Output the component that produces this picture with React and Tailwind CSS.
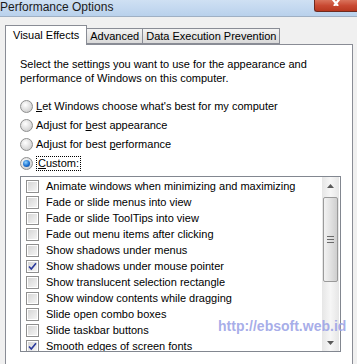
import React from "react";

const effects = [
  { label: "Animate windows when minimizing and maximizing", on: false },
  { label: "Fade or slide menus into view", on: false },
  { label: "Fade or slide ToolTips into view", on: false },
  { label: "Fade out menu items after clicking", on: false },
  { label: "Show shadows under menus", on: false },
  { label: "Show shadows under mouse pointer", on: true },
  { label: "Show translucent selection rectangle", on: false },
  { label: "Show window contents while dragging", on: false },
  { label: "Slide open combo boxes", on: false },
  { label: "Slide taskbar buttons", on: false },
  { label: "Smooth edges of screen fonts", on: true },
];

function Radio({ checked }) {
  return (
    <span className="w-[13px] h-[13px] rounded-full border border-[#8e8f8f] bg-[radial-gradient(circle_at_40%_35%,#ffffff,#d4d4d4_70%,#bcbcbc)] flex items-center justify-center shrink-0">
      {checked && (
        <span className="w-[7px] h-[7px] rounded-full bg-[radial-gradient(circle_at_40%_35%,#8fd3ff,#1a6fd0_55%,#0b3f8c)]" />
      )}
    </span>
  );
}

function Checkbox({ checked }) {
  return (
    <span className="w-[13px] h-[13px] border border-[#8f8f8f] bg-white flex items-center justify-center shrink-0">
      <span className="w-[9px] h-[9px] bg-gradient-to-br from-[#d6d6d6] to-[#f4f4f4] flex items-center justify-center">
        {checked && (
          <svg width="9" height="9" viewBox="0 0 9 9">
            <path d="M1 4.5 L3.3 7 L8 1.2" fill="none" stroke="#2b3a9c" strokeWidth="1.6" />
          </svg>
        )}
      </span>
    </span>
  );
}

function Tab({ children, active }) {
  if (active) {
    return (
      <div className="relative z-10 -mb-px h-[20px] px-[7px] bg-white border border-b-0 border-[#898c95] flex items-center text-[11px] text-black">
        {children}
      </div>
    );
  }
  return (
    <div className="h-[16px] px-[3px] -ml-px bg-gradient-to-b from-[#f3f3f3] to-[#d9d9d9] border border-[#898c95] flex items-center text-[11px] text-black">
      {children}
    </div>
  );
}

export default function App() {
  return (
    <div className="w-[357px] h-[364px] overflow-hidden bg-[#f0f0f0] font-['Liberation_Sans',Arial,sans-serif] text-[11px] text-black">
      <div className="h-[17px] flex justify-between bg-gradient-to-b from-[#cfe0f3] to-[#b9d1ec] border-b border-[#9fb0c4]">
        <span className="text-[12px] leading-[16px] text-[#1b1b1b] -mt-[1px]">Performance Options</span>
        <div className="w-[43px] h-[12px] rounded-bl-[3px] border border-t-0 border-r-0 border-[#6e2a20] bg-gradient-to-b from-[#d9735c] via-[#c94a33] to-[#b8381f] flex items-start justify-center">
          <svg width="10" height="6" viewBox="0 0 10 6">
            <path d="M1.5 -1 L7 6 M8.5 -1 L3 6" stroke="#ffffff" strokeWidth="2.2" />
          </svg>
        </div>
      </div>

      <div className="mt-[8px] ml-[5px] flex items-end">
        <Tab active>Visual Effects</Tab>
        <Tab>Advanced</Tab>
        <Tab>Data Execution Prevention</Tab>
      </div>

      <div className="relative ml-[5px] mr-[4px] h-[330px] bg-white border border-[#898c95] pl-[14px] pt-[12px]">
        <p className="leading-[14px]">
          Select the settings you want to use for the appearance and
          <br />
          performance of Windows on this computer.
        </p>

        <div className="mt-[12px] flex flex-col">
          <label className="h-[19px] flex items-center gap-[3px]">
            <Radio />
            <span>
              <u>L</u>et Windows choose what's best for my computer
            </span>
          </label>
          <label className="h-[19px] flex items-center gap-[3px]">
            <Radio />
            <span>
              Adjust for <u>b</u>est appearance
            </span>
          </label>
          <label className="h-[19px] flex items-center gap-[3px]">
            <Radio />
            <span>
              Adjust for best <u>p</u>erformance
            </span>
          </label>
          <label className="h-[19px] flex items-center gap-[3px]">
            <Radio checked />
            <span className="border border-dotted border-black px-[1px] leading-[13px]">
              <u>C</u>ustom:
            </span>
          </label>
        </div>

        <div className="mt-[3px] w-[321px] h-[176px] border border-[#828790] bg-white flex overflow-hidden">
          <div className="flex-1 pt-[1px] pl-[5px]">
            {effects.map((e) => (
              <div key={e.label} className="h-[16px] flex items-center gap-[7px] whitespace-nowrap">
                <Checkbox checked={e.on} />
                <span>{e.label}</span>
              </div>
            ))}
          </div>
          <div className="w-[17px] mr-[1px] bg-gradient-to-r from-[#e6e6e6] via-[#f6f6f6] to-[#e6e6e6] flex flex-col items-center">
            <div className="h-[17px] flex items-center justify-center">
              <svg width="7" height="4" viewBox="0 0 7 4">
                <path d="M0 4 L3.5 0 L7 4 Z" fill="#5a5a5a" />
              </svg>
            </div>
            <div className="mt-[3px] w-[15px] h-[85px] rounded-[2px] border border-[#9a9a9a] bg-gradient-to-r from-[#f2f2f2] via-[#e2e2e2] to-[#cfcfcf] flex flex-col items-center justify-center gap-[2px]">
              <span className="w-[7px] h-px bg-[#6a6a6a]" />
              <span className="w-[7px] h-px bg-[#6a6a6a]" />
              <span className="w-[7px] h-px bg-[#6a6a6a]" />
            </div>
            <div className="flex-1" />
            <div className="h-[17px] flex items-center justify-center">
              <svg width="7" height="4" viewBox="0 0 7 4">
                <path d="M0 0 L3.5 4 L7 0 Z" fill="#5a5a5a" />
              </svg>
            </div>
          </div>
        </div>

        <span className="absolute left-[212px] top-[271px] font-['Liberation_Sans',Arial,sans-serif] font-bold text-[14px] text-[#9ca3e6]/90">
          http://ebsoft.web.id
        </span>
      </div>
    </div>
  );
}
